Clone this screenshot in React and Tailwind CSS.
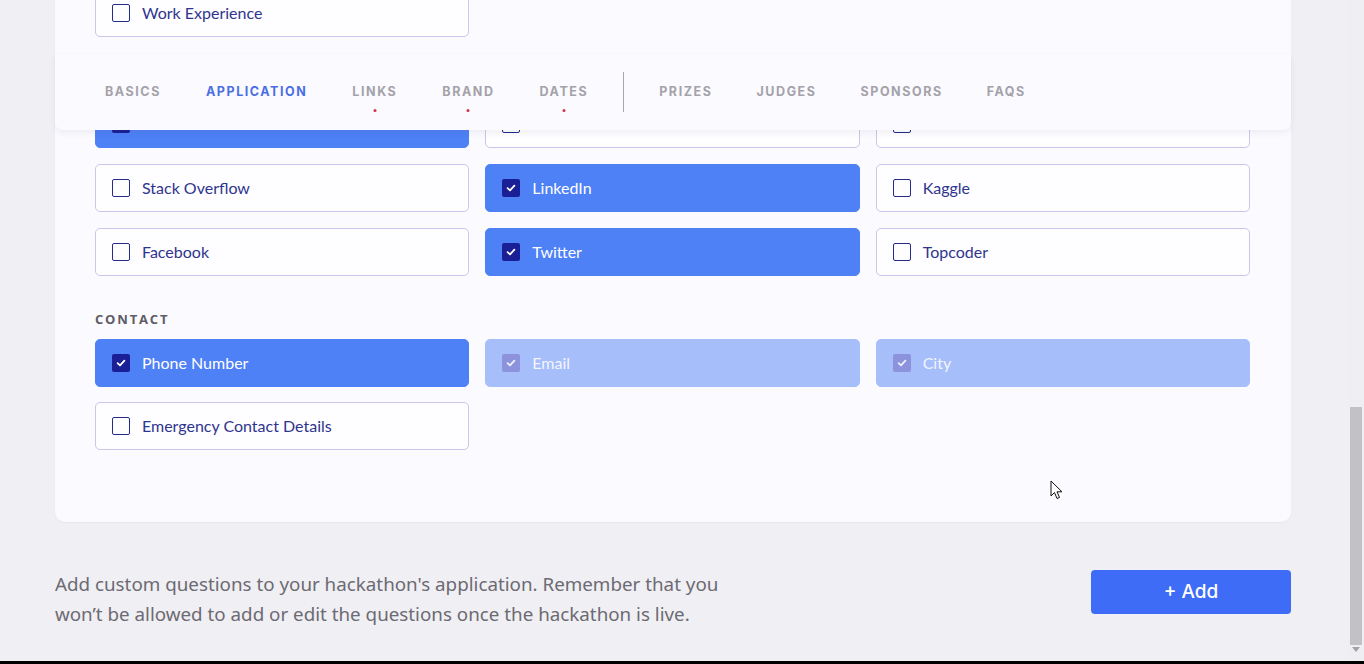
import React from "react";

function Check({ color }) {
  return (
    <svg width="10" height="10" viewBox="0 0 10 10" fill="none">
      <path d="M1.6 5.2 L4 7.4 L8.4 2.6" stroke={color} strokeWidth="1.8" strokeLinecap="round" strokeLinejoin="round" />
    </svg>
  );
}

function Item({ label, state = "off" }) {
  if (state === "on") {
    return (
      <div className="h-[48px] rounded-[5px] bg-[#4e80f6] border border-[#4e80f6] flex items-center pl-[16px] gap-[12px]">
        <div className="w-[18px] h-[18px] rounded-[2px] bg-[#1b1f96] flex items-center justify-center">
          <Check color="#ffffff" />
        </div>
        <span className="text-[16px] text-white font-['Lato',sans-serif]">{label}</span>
      </div>
    );
  }
  if (state === "dis") {
    return (
      <div className="h-[48px] rounded-[5px] bg-[#a6befa] border border-[#a6befa] flex items-center pl-[16px] gap-[12px]">
        <div className="w-[18px] h-[18px] rounded-[2px] bg-[#8d92dc] flex items-center justify-center">
          <Check color="#eef0ff" />
        </div>
        <span className="text-[16px] text-[#f2f4ff] font-['Lato',sans-serif]">{label}</span>
      </div>
    );
  }
  return (
    <div className="h-[48px] rounded-[5px] bg-[#fefdff] border border-[#c9c7ea] flex items-center pl-[16px] gap-[12px]">
      <div className="w-[18px] h-[18px] rounded-[2px] border-[1.5px] border-[#232b8c]" />
      <span className="text-[16px] text-[#2e358e] font-['Lato',sans-serif]">{label}</span>
    </div>
  );
}

function Label({ children, top }) {
  return (
    <div
      className={
        top +
        " mb-[12px] h-[16px] leading-[16px] text-[13px] font-bold tracking-[0.14em] text-[#5e5c66] font-['Open_Sans',sans-serif]"
      }
    >
      {children}
    </div>
  );
}

const tabsLeft = [
  { t: "BASICS" },
  { t: "APPLICATION", active: true },
  { t: "LINKS", dot: true },
  { t: "BRAND", dot: true },
  { t: "DATES", dot: true },
];
const tabsRight = [{ t: "PRIZES" }, { t: "JUDGES" }, { t: "SPONSORS" }, { t: "FAQS" }];

function Tab({ t, active, dot }) {
  return (
    <div className="relative flex items-center">
      <span
        className={
          "text-[12.5px] font-bold tracking-[0.125em] font-['Inter',sans-serif] " +
          (active ? "text-[#4a6fe3]" : "text-[#a4a2a9]")
        }
      >
        {t}
      </span>
      {dot && (
        <span className="absolute left-1/2 -translate-x-1/2 top-[26px] w-[3px] h-[3px] rounded-full bg-[#d3344a]" />
      )}
    </div>
  );
}

export default function App() {
  return (
    <div className="w-[1364px] h-[664px] overflow-hidden flex flex-col bg-[#f0eff4]">
      <div className="flex h-[661px]">
        <div className="relative flex-1 overflow-hidden">
          <div className="ml-[55px] w-[1236px]">
            <div className="bg-[#fbfaff] rounded-b-[10px] shadow-[0_1px_2px_rgba(0,0,0,0.04)] pl-[40px] pr-[41px] pb-[72px]">
              <div className="grid grid-cols-3 gap-[16px] -mt-[11px]">
                <Item label="Work Experience" />
              </div>
              <Label top="mt-[35px]" />
              <div className="grid grid-cols-3 gap-[16px]">
                <Item label="GitHub" state="on" />
                <Item label="Dribbble" />
                <Item label="Behance" />
                <Item label="Stack Overflow" />
                <Item label="LinkedIn" state="on" />
                <Item label="Kaggle" />
                <Item label="Facebook" />
                <Item label="Twitter" state="on" />
                <Item label="Topcoder" />
              </div>
              <Label top="mt-[35px]">CONTACT</Label>
              <div className="grid grid-cols-3 gap-x-[16px] gap-y-[15px]">
                <Item label="Phone Number" state="on" />
                <Item label="Email" state="dis" />
                <Item label="City" state="dis" />
                <Item label="Emergency Contact Details" />
              </div>
            </div>

            <div className="mt-[47px] flex justify-between items-start">
              <p className="w-[700px] text-[18.8px] leading-[30px] text-[#6c6a72] font-['Noto_Sans',sans-serif]">
                Add custom questions to your hackathon's application. Remember that you won’t be allowed to add or edit the questions once the hackathon is live.
              </p>
              <button className="mt-[1px] w-[200px] h-[44px] rounded-[4px] bg-[#3e6cf6] text-white text-[19px] font-medium font-['Inter',sans-serif]">
                + Add
              </button>
            </div>
          </div>

          {/* sticky tab bar overlay */}
          <div className="absolute left-[55px] top-[54px] w-[1236px] h-[76px] bg-[#fbfaff] rounded-b-[8px] shadow-[0_3px_6px_rgba(60,50,90,0.07)] flex items-center pl-[50px]">
            <div className="flex items-center gap-[45px]">
              {tabsLeft.map((x) => (
                <Tab key={x.t} {...x} />
              ))}
            </div>
            <div className="w-px h-[40px] bg-[#a9a7ad] mx-[35px]" />
            <div className="flex items-center gap-[44px]">
              {tabsRight.map((x) => (
                <Tab key={x.t} {...x} />
              ))}
            </div>
          </div>

          {/* mouse cursor */}
          <svg className="absolute left-[1050px] top-[480px]" width="13" height="20" viewBox="0 0 13 20">
            <path d="M1 1 L1 16 L4.5 12.5 L7 18.5 L9.5 17.5 L7 11.8 L12 11.8 Z" fill="#ffffff" stroke="#111111" strokeWidth="1" strokeLinejoin="round" />
          </svg>
        </div>

        {/* scrollbar */}
        <div className="w-[16px] h-full bg-[#efeef2] flex flex-col items-center">
          <div className="flex-1 w-full flex flex-col justify-end pb-[2px]">
            <div className="mx-[2px] h-[238px] bg-[#c2c1c6]" />
          </div>
          <div className="h-[14px] flex items-start justify-center">
            <svg width="8" height="5" viewBox="0 0 8 5">
              <path d="M0 0 L8 0 L4 5 Z" fill="#a3a3a6" />
            </svg>
          </div>
        </div>
      </div>
      <div className="h-[3px] bg-black" />
    </div>
  );
}
